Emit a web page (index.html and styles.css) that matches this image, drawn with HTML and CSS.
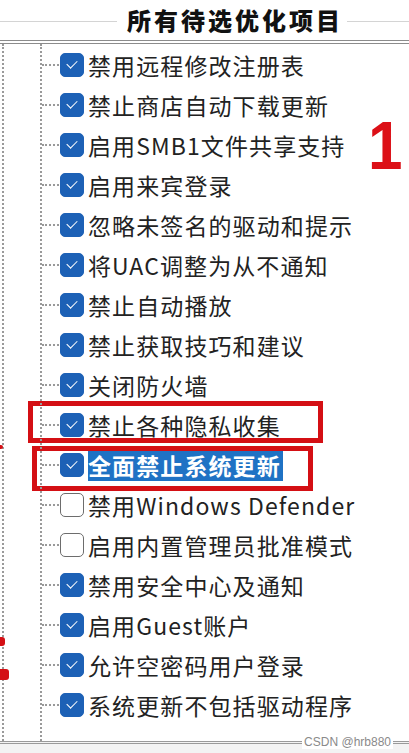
FILE: index.html
```html
<!DOCTYPE html>
<html lang="zh-CN">
<head>
    <meta charset="UTF-8">
    <meta name="viewport" content="width=device-width, initial-scale=1.0">
    <title>所有待选优化项目</title>
    <link rel="stylesheet" href="styles.css">
</head>
<body>
<div class="panel">
    <!-- Group title -->
    <div class="header">
        <span class="rule"></span>
        <h1>所有待选优化项目</h1>
        <span class="rule short"></span>
    </div>

    <!-- Tree -->
    <div class="tree">
        <ul class="items">
            <li><i class="branch"></i><span class="box on"></span><span class="label">禁用远程修改注册表</span></li>
            <li><i class="branch"></i><span class="box on"></span><span class="label">禁止商店自动下载更新</span></li>
            <li><i class="branch"></i><span class="box on"></span><span class="label">启用SMB1文件共享支持</span></li>
            <li><i class="branch"></i><span class="box on"></span><span class="label">启用来宾登录</span></li>
            <li><i class="branch"></i><span class="box on"></span><span class="label">忽略未签名的驱动和提示</span></li>
            <li><i class="branch"></i><span class="box on"></span><span class="label">将UAC调整为从不通知</span></li>
            <li><i class="branch"></i><span class="box on"></span><span class="label">禁止自动播放</span></li>
            <li><i class="branch"></i><span class="box on"></span><span class="label">禁止获取技巧和建议</span></li>
            <li><i class="branch"></i><span class="box on"></span><span class="label">关闭防火墙</span></li>
            <li><i class="branch"></i><span class="box on"></span><span class="label">禁止各种隐私收集</span></li>
            <li><i class="branch"></i><span class="box on"></span><span class="label selected">全面禁止系统更新</span></li>
            <li><i class="branch"></i><span class="box"></span><span class="label">禁用Windows Defender</span></li>
            <li><i class="branch"></i><span class="box"></span><span class="label">启用内置管理员批准模式</span></li>
            <li><i class="branch"></i><span class="box on"></span><span class="label">禁用安全中心及通知</span></li>
            <li><i class="branch"></i><span class="box on"></span><span class="label">启用Guest账户</span></li>
            <li><i class="branch"></i><span class="box on"></span><span class="label">允许空密码用户登录</span></li>
            <li><i class="branch"></i><span class="box on"></span><span class="label">系统更新不包括驱动程序</span></li>
        </ul>

        <!-- annotations -->
        <div class="mark mark-a"></div>
        <div class="mark mark-b"></div>
        <div class="mark mark-c"></div>
        <div class="mark mark-d"></div>
        <div class="mark mark-e"></div>
        <div class="num">1</div>
    </div>

    <div class="footer">
        <span class="watermark">CSDN @hrb880</span>
    </div>
</div>
</body>
</html>
```

FILE: styles.css
```css
/* Reset */
body, h1, ul, li {
    margin: 0;
    padding: 0;
}

body {
    font-family: "Noto Sans CJK SC", "Noto Sans", sans-serif;
    background: #fff;
    color: #222;
    width: 409px;
    height: 753px;
    overflow: hidden;
}

.panel {
    display: flex;
    flex-direction: column;
    height: 753px;
}

/* Header */
.header {
    display: flex;
    align-items: center;
    height: 40px;
    border-bottom: 4px double #8c8c8c;
}

.header .rule {
    flex: 1;
    height: 1px;
    background: #d4d4d4;
    margin-top: 2px;
}

.header .rule.short {
    flex: 0 0 62px;
}

.header h1 {
    font-size: 24px;
    font-weight: 900;
    letter-spacing: 3px;
    color: #111;
    padding: 0 4px 0 10px;
    line-height: 40px;
}

/* Tree */
.tree {
    position: relative;
    height: 697px;
}

.tree::before,
.tree::after {
    content: "";
    position: absolute;
    top: 0;
    bottom: 0;
    border-left: 2px dotted #9a9a9a;
}

.tree::before { left: 2px; }
.tree::after { left: 40px; }

.items {
    list-style: none;
    padding: 1px 0 0 42px;
}

.items li {
    display: flex;
    align-items: center;
    height: 40px;
}

.branch {
    width: 17px;
    border-top: 2px dotted #9a9a9a;
}

.box {
    width: 22px;
    height: 22px;
    border: 1.5px solid #6d6d6d;
    border-radius: 5px;
    margin-left: 1px;
    margin-right: 4px;
    background: #fff;
    position: relative;
}

.box.on {
    background: #1d61b6;
    border-color: #1d61b6;
}

.box.on::after {
    content: "";
    position: absolute;
    left: 6px;
    top: 6px;
    width: 9px;
    height: 5px;
    border-left: 1.5px solid #fff;
    border-bottom: 1.5px solid #fff;
    transform: rotate(-45deg);
}

.label {
    font-size: 23px;
    letter-spacing: 1.1px;
    line-height: 32px;
    color: #222;
    white-space: nowrap;
}

.label.selected {
    background: #1f72c4;
    color: #fff;
    font-weight: 700;
    padding-right: 2px;
}

/* Red annotations */
.mark {
    position: absolute;
    border: 5px solid #d40f14;
}

.mark-a {
    left: 28px;
    top: 357px;
    width: 285px;
    height: 32px;
}

.mark-b {
    left: 32px;
    top: 402px;
    width: 271px;
    height: 35px;
}

.mark-c,
.mark-d,
.mark-e {
    left: 0;
    border: none;
    background: #d40f14;
    border-radius: 0 3px 3px 0;
}

.mark-c {
    top: 401px;
    width: 3px;
    height: 4px;
}

.mark-d {
    top: 593px;
    width: 5px;
    height: 9px;
}

.mark-e {
    top: 625px;
    width: 9px;
    height: 11px;
}

.num {
    position: absolute;
    left: 368px;
    top: 70px;
    font-family: "Liberation Sans", Arial, sans-serif;
    font-size: 62px;
    font-weight: 700;
    color: #dc1017;
    line-height: 1;
    transform: scaleY(1.12);
}

/* Footer */
.footer {
    position: relative;
    flex: 1;
    border-top: 3px double #9a9a9a;
    background: #f3f3f3;
}

.watermark {
    position: absolute;
    right: 16px;
    top: -9px;
    font-family: "Liberation Sans", Arial, sans-serif;
    font-size: 12px;
    color: #8a8a8a;
    background: #fff;
    padding: 0 2px;
}
```
